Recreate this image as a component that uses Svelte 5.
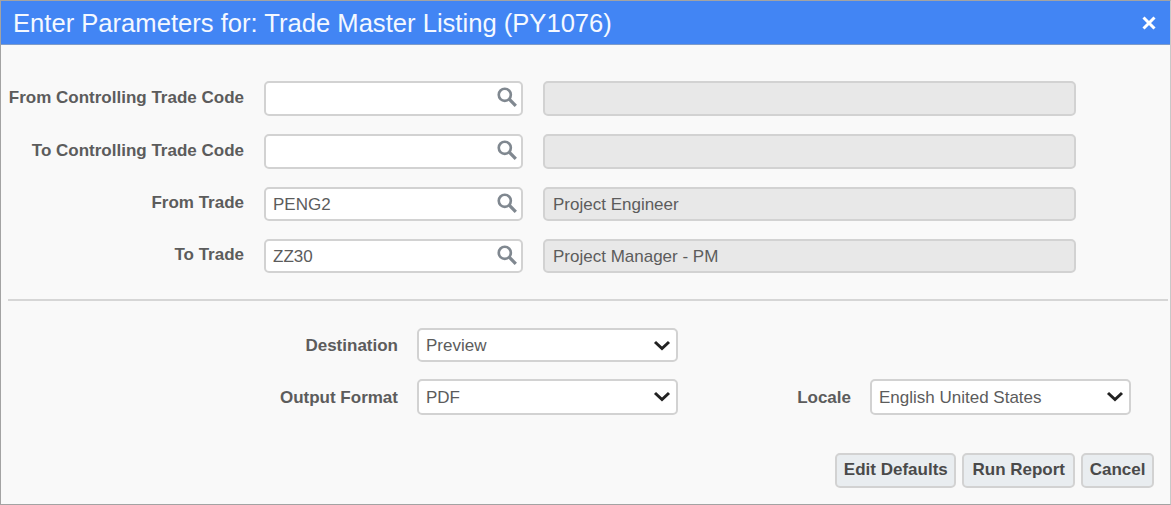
<script>
	const lookups = [
		{ label: 'From Controlling Trade Code', value: '', desc: '' },
		{ label: 'To Controlling Trade Code', value: '', desc: '' },
		{ label: 'From Trade', value: 'PENG2', desc: 'Project Engineer' },
		{ label: 'To Trade', value: 'ZZ30', desc: 'Project Manager - PM' }
	];

	let destination = $state('Preview');
	let format = $state('PDF');
	let locale = $state('English United States');
</script>

{#snippet chevron()}
	<svg class="chevron" viewBox="0 0 18 12" width="18" height="12" aria-hidden="true">
		<path d="M2 3l7 6.5L16 3" fill="none" stroke="#222" stroke-width="3" />
	</svg>
{/snippet}

<div class="dialog">
	<header>
		<h1>Enter Parameters for: Trade Master Listing (PY1076)</h1>
		<button class="close" type="button" aria-label="Close">
			<svg viewBox="0 0 16 16" width="16" height="16">
				<path d="M2.5 2.5l11 11M13.5 2.5l-11 11" stroke="#fff" stroke-width="3" />
			</svg>
		</button>
	</header>

	<section class="lookups">
		{#each lookups as row}
			<label for={row.label}>{row.label}</label>
			<div class="lookup">
				<input id={row.label} value={row.value} />
				<svg class="search" viewBox="0 0 20 20" width="22" height="22" aria-hidden="true">
					<circle cx="8" cy="8" r="5.5" fill="none" stroke="#808890" stroke-width="2.4" />
					<path d="M12 12l6 6" stroke="#808890" stroke-width="3" />
				</svg>
			</div>
			<input class="desc" value={row.desc} readonly />
		{/each}
	</section>

	<hr />

	<section class="output">
		<label for="destination">Destination</label>
		<div class="select">
			<select id="destination" bind:value={destination}>
				<option>Preview</option>
			</select>
			{@render chevron()}
		</div>
		<span></span>
		<span></span>

		<label for="format">Output Format</label>
		<div class="select">
			<select id="format" bind:value={format}>
				<option>PDF</option>
			</select>
			{@render chevron()}
		</div>
		<label for="locale">Locale</label>
		<div class="select">
			<select id="locale" bind:value={locale}>
				<option>English United States</option>
			</select>
			{@render chevron()}
		</div>
	</section>

	<footer>
		<button type="button">Edit Defaults</button>
		<button type="button" class="run">Run Report</button>
		<button type="button">Cancel</button>
	</footer>
</div>

<style>
	:global(body) {
		margin: 0;
		font-family: 'Liberation Sans', Arial, sans-serif;
	}

	.dialog {
		box-sizing: border-box;
		width: 1171px;
		height: 505px;
		background: #f9f9f9;
		border: 1px solid #a3a3a3;
		border-right-color: #c8c8c8;
		overflow: hidden;
	}

	header {
		display: flex;
		justify-content: space-between;
		align-items: center;
		height: 44px;
		padding: 1px 13px 0 12px;
		background: #4285f4;
		border-bottom: 1px solid #7f9cc9;
		box-sizing: border-box;
	}

	h1 {
		margin: 0;
		color: #f4f8ff;
		font-size: 25.6px;
		font-weight: 400;
		white-space: nowrap;
	}

	.close {
		display: flex;
		padding: 0;
		background: none;
		border: 0;
	}

	.lookups {
		display: grid;
		grid-template-columns: 235px 259px 533px;
		grid-template-rows: 35px 35px 34px 34px;
		column-gap: 20px;
		row-gap: 18px;
		align-items: center;
		margin: 36px 0 0 8px;
	}

	.lookups label {
		margin-left: -1px;
		text-align: right;
	}

	label {
		margin-top: -2px;
		color: #5c5c5c;
		font-size: 17px;
		font-weight: 700;
		white-space: nowrap;
	}

	.lookups > .lookup,
	.lookups > .desc {
		height: 100%;
	}

	.lookup {
		position: relative;
	}

	input,
	select {
		box-sizing: border-box;
		width: 100%;
		height: 100%;
		padding: 2px 7px 0;
		color: #5c5c5c;
		background: #fff;
		border: 2px solid #d2d2d2;
		border-radius: 5px;
		font: 17px 'Liberation Sans', Arial, sans-serif;
		outline: none;
	}

	input.desc {
		padding-left: 8px;
		background: #e8e8e8;
	}

	.search {
		position: absolute;
		top: 5px;
		right: 5px;
	}

	hr {
		height: 2px;
		margin: 26px 2px 0 7px;
		background: #d6d6d6;
		border: 0;
	}

	.output {
		display: grid;
		grid-template-columns: 389px 261px 154px 261px;
		grid-template-rows: 34px 36px;
		column-gap: 19px;
		row-gap: 17px;
		align-items: center;
		margin-top: 27px;
		margin-left: 8px;
	}

	.output > label {
		margin-top: 1px;
		text-align: right;
	}

	.output > .select {
		height: 100%;
	}

	.select {
		position: relative;
	}

	select {
		appearance: none;
		padding-top: 0;
	}

	.chevron {
		position: absolute;
		top: 11px;
		right: 7px;
		pointer-events: none;
	}

	footer {
		display: flex;
		justify-content: flex-end;
		gap: 6px;
		margin-top: 38px;
		margin-right: 16px;
	}

	footer button {
		box-sizing: border-box;
		height: 35px;
		padding: 0 6.5px 1px;
		color: #4a4a4a;
		background: #e9edf0;
		border: 2px solid #d2d2d2;
		border-radius: 5px;
		font: 700 17px 'Liberation Sans', Arial, sans-serif;
		white-space: nowrap;
	}

	footer .run {
		min-width: 113px;
	}
</style>
